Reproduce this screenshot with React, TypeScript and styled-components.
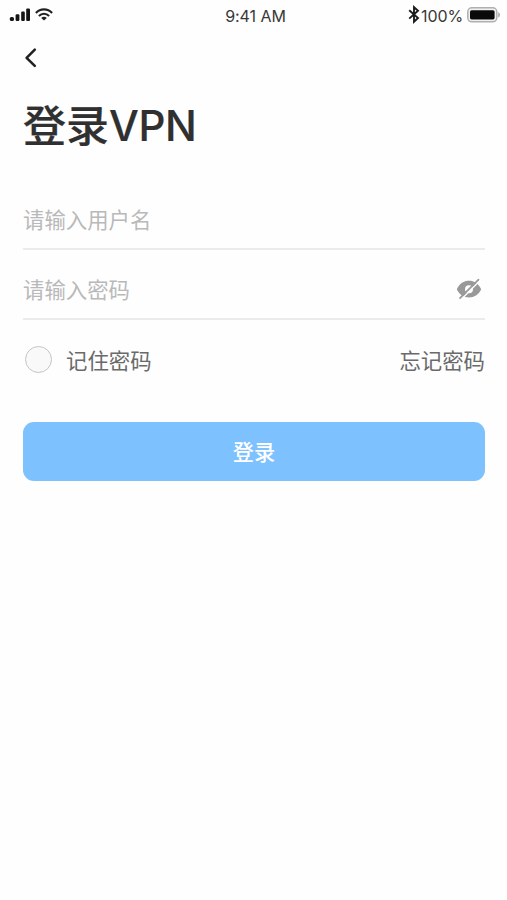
import React from 'react';
import styled, { createGlobalStyle } from 'styled-components';

const GlobalStyle = createGlobalStyle`
  * { box-sizing: border-box; }
  body {
    margin: 0;
    background: #fefefe;
    font-family: Inter, "Noto Sans CJK SC", sans-serif;
  }
  button { font: inherit; border: 0; padding: 0; background: none; cursor: pointer; }
`;

const Screen = styled.main`
  height: 900px;
  overflow: hidden;
  background: #fefefe;
`;

const StatusBar = styled.header`
  display: grid;
  grid-template-columns: 1fr auto 1fr;
  align-items: center;
  height: 32px;
  padding: 0 6px 0 9px;
  color: #383838;
  font-family: Inter, sans-serif;
  font-size: 16px;
`;

const StatusGroup = styled.div<{ $end?: boolean }>`
  display: flex;
  align-items: center;
  justify-content: ${(p) => (p.$end ? 'flex-end' : 'flex-start')};
  gap: ${(p) => (p.$end ? '0' : '4px')};
  padding-bottom: ${(p) => (p.$end ? '2px' : '3px')};
`;

const Clock = styled.time`
  letter-spacing: -0.05px;
  margin-left: 1px;
  line-height: 32px;
`;

const Percent = styled.span`
  margin: 0 4px 0 1px;
  padding-top: 2px;
  line-height: 28px;
  letter-spacing: -0.1px;
`;

const Glyph = styled.svg`
  display: block;
  flex: none;
`;

const BackButton = styled.button`
  display: block;
  margin: 14px 0 0 23px;
  width: 16px;
  height: 24px;
`;

const Content = styled.form`
  padding: 0 22px 0 23px;
`;

const Title = styled.h1`
  margin: 24px 0 0;
  height: 64px;
  line-height: 64px;
  color: #303030;
  font-size: 43px;
  font-weight: 500;
  white-space: nowrap;
  -webkit-text-stroke: 0.2px #303030;
`;

const Latin = styled.span`
  font-size: 42px;
  letter-spacing: -0.4px;
  vertical-align: 1px;
  line-height: 1;
`;

const Field = styled.label<{ $first?: boolean }>`
  display: flex;
  align-items: center;
  height: 70px;
  margin-top: ${(p) => (p.$first ? '22px' : '0')};
  padding: 8px 0 0;
  border-bottom: 2px solid #ebebeb;
`;

const Input = styled.input`
  flex: 1;
  min-width: 0;
  height: 40px;
  padding: 0;
  border: 0;
  outline: 0;
  background: transparent;
  color: #333;
  font: 400 21.4px "Noto Sans CJK SC", sans-serif;
  &::placeholder { color: #b9b9b9; opacity: 1; }
`;

const IconButton = styled.button`
  width: 28px;
  height: 24px;
  margin: 2px 2px 0 0;
`;

const Options = styled.div`
  display: flex;
  align-items: center;
  justify-content: space-between;
  height: 40px;
  margin-top: 20px;
  color: #6a6a6a;
  font: 400 21.4px/40px "Noto Sans CJK SC", sans-serif;
`;

const Remember = styled.label`
  display: flex;
  align-items: center;
`;

const Radio = styled.input`
  appearance: none;
  width: 27px;
  height: 27px;
  margin: 0 14px 2px 2px;
  border: 1px solid #c4c4c4;
  border-radius: 50%;
  background: #f9f9f9;
`;

const LinkButton = styled.button`
  color: inherit;
`;

const Submit = styled.button`
  display: block;
  width: 100%;
  height: 59px;
  margin-top: 42px;
  padding-bottom: 2px;
  border-radius: 11px;
  background: #7dc1ff;
  color: #fff;
  font: 500 21.2px/57px "Noto Sans CJK SC", sans-serif;
`;

const Signal = () => (
  <Glyph width="22" height="14" viewBox="0 0 22 14" fill="#151515">
    <rect x="0.8" y="9" width="4.2" height="4" rx="1.6" />
    <rect x="6.6" y="6.3" width="3.8" height="6.7" rx="1.2" />
    <rect x="12.2" y="3.6" width="3.6" height="9.4" rx="1.1" />
    <rect x="17.2" y="0.4" width="3.8" height="12.6" rx="1.1" />
  </Glyph>
);

const Wifi = () => (
  <Glyph width="18" height="13" viewBox="0 0 18 13" fill="none" stroke="#222" strokeWidth="2.1">
    <path d="M.9 4.9C5.4.2 12.6.2 17.1 4.9" />
    <path d="M3.9 8C6.8 5 11.2 5 14.1 8" />
    <path d="M9 12.6 6.2 9.9c1.5-1.5 4.1-1.5 5.6 0Z" fill="#222" stroke="none" />
  </Glyph>
);

const Bluetooth = () => (
  <Glyph width="12" height="21" viewBox="0 0 12 21" fill="none" stroke="#1c1c1c" strokeWidth="1.9">
    <path d="M1.2 5.2l8.8 7.8L6 16.8V2.2l4 3.6L1.2 13.6" />
  </Glyph>
);

const Battery = () => (
  <Glyph width="34" height="16" viewBox="0 0 34 16">
    <rect x="0.8" y="0.8" width="29" height="14" rx="4" fill="#f0f0f0" stroke="#b0b0b0" strokeWidth="1.5" />
    <rect x="3" y="3.2" width="24.6" height="9.2" rx="1.6" fill="#0a0a0a" />
    <path d="M31.2 5.2c2.4.8 2.4 4.4 0 5.2Z" fill="#aaa" />
  </Glyph>
);

const HiddenEye = () => (
  <Glyph width="28" height="24" viewBox="0 0 28 24">
    <path
      fillRule="evenodd"
      fill="#999"
      d="M1.8 12.2C4.5 6.4 8.8 3.8 14 3.8S23.5 6.4 26.2 12.2C23.5 17.8 19.2 20.4 14 20.4S4.5 17.8 1.8 12.2ZM14 8.2a4 4 0 1 0 0 8 4 4 0 0 0 0-8Z"
    />
    <path d="M6.2 22.4 25 3.6" stroke="#fefefe" strokeWidth="1.4" />
    <path d="M5 21.2 23.5 2.6" stroke="#999" strokeWidth="1.7" strokeLinecap="round" />
  </Glyph>
);

export default function App() {
  return (
    <Screen>
      <GlobalStyle />
      <StatusBar>
        <StatusGroup>
          <Signal />
          <Wifi />
        </StatusGroup>
        <Clock>9:41 AM</Clock>
        <StatusGroup $end>
          <Bluetooth />
          <Percent>100%</Percent>
          <Battery />
        </StatusGroup>
      </StatusBar>
      <BackButton type="button" aria-label="返回">
        <Glyph width="16" height="24" viewBox="0 0 16 24" fill="none" stroke="#222" strokeWidth="2.6" strokeLinecap="round" strokeLinejoin="round">
          <path d="M11.8 3.7 3.6 11.8l8.2 8.1" />
        </Glyph>
      </BackButton>
      <Content onSubmit={(e) => e.preventDefault()}>
        <Title>
          登录<Latin>VPN</Latin>
        </Title>
        <Field $first>
          <Input placeholder="请输入用户名" />
        </Field>
        <Field>
          <Input type="password" placeholder="请输入密码" />
          <IconButton type="button" aria-label="显示密码">
            <HiddenEye />
          </IconButton>
        </Field>
        <Options>
          <Remember>
            <Radio type="checkbox" />
            记住密码
          </Remember>
          <LinkButton type="button">忘记密码</LinkButton>
        </Options>
        <Submit type="submit">登录</Submit>
      </Content>
    </Screen>
  );
}
